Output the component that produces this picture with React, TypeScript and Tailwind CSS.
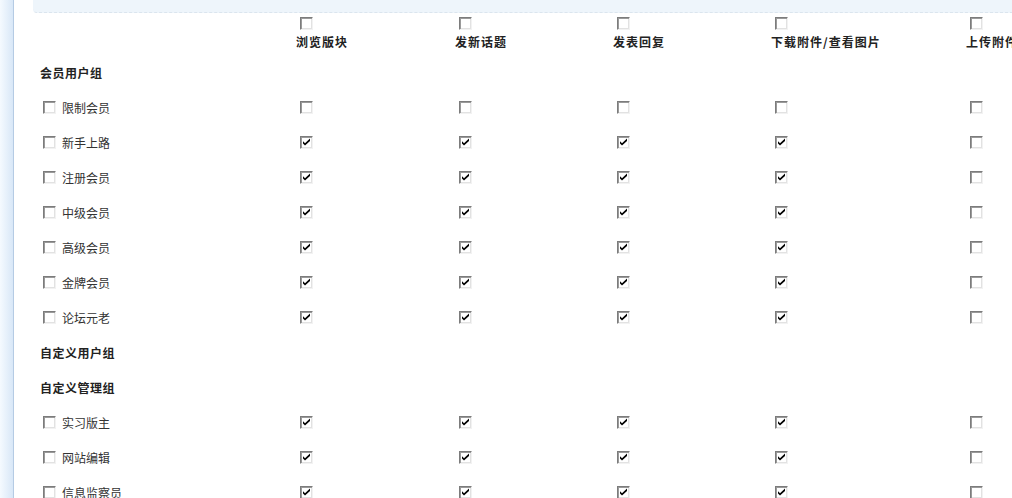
const columns = [
  { title: "浏览版块", width: "w-[159px]" },
  { title: "发新话题", width: "w-[158px]" },
  { title: "发表回复", width: "w-[158px]" },
  { title: "下载附件/查看图片", width: "w-[195px]" },
  { title: "上传附件", width: "w-[160px]" },
];

type Row = { kind: "group"; name: string } | { kind: "item"; name: string; perms: boolean[] };

const on = [true, true, true, true, false];
const off = [false, false, false, false, false];

const rows: Row[] = [
  { kind: "group", name: "会员用户组" },
  { kind: "item", name: "限制会员", perms: off },
  { kind: "item", name: "新手上路", perms: on },
  { kind: "item", name: "注册会员", perms: on },
  { kind: "item", name: "中级会员", perms: on },
  { kind: "item", name: "高级会员", perms: on },
  { kind: "item", name: "金牌会员", perms: on },
  { kind: "item", name: "论坛元老", perms: on },
  { kind: "group", name: "自定义用户组" },
  { kind: "group", name: "自定义管理组" },
  { kind: "item", name: "实习版主", perms: on },
  { kind: "item", name: "网站编辑", perms: on },
  { kind: "item", name: "信息监察员", perms: on },
];

function Check({ checked }: { checked?: boolean }) {
  return (
    <span className="relative block w-[13px] h-[13px] shrink-0 bg-white border border-t-[#7c7c7c] border-l-[#7c7c7c] border-b-[#f2f2f2] border-r-[#f2f2f2] shadow-[inset_1px_1px_0_#9a9a9a,inset_-1px_-1px_0_#e2e2e2]">
      {checked ? (
        <svg viewBox="0 0 13 13" className="absolute -left-px -top-px w-[13px] h-[13px]">
          <path d="M3 5.2 L5 7.2 L10 2.6 L10 5 L5 9.6 L3 7.6 Z" fill="#000" />
        </svg>
      ) : null}
    </span>
  );
}

export default function App() {
  return (
    <div className="flex w-[1012px] h-[498px] overflow-hidden bg-white font-['Noto_Sans_CJK_SC','Noto_Sans',sans-serif] text-[12px]">
      <div className="w-[14px] shrink-0 bg-gradient-to-r from-[#f5faff] to-[#d8e7f7] border-r border-[#b5cbe4]" />

      <div className="flex-1 flex flex-col min-w-0">
        <div className="ml-[19px] h-[13px] shrink-0 bg-[#eef5fb] border-b border-dashed border-[#dbe5ee] rounded-bl-[4px]" />

        <div className="pl-[26px] flex flex-col">
          <div className="flex h-[42px] items-start">
            <div className="w-[256px] shrink-0" />
            {columns.map((col) => (
              <div key={col.title} className={`${col.width} shrink-0 flex flex-col items-start pt-[4px]`}>
                <div className="flex ml-[4px]">
                  <Check />
                </div>
                <span className="mt-[4px] leading-[16px] font-bold text-[#222] tracking-[1px] whitespace-nowrap">
                  {col.title}
                </span>
              </div>
            ))}
          </div>

          {rows.map((row) =>
            row.kind === "group" ? (
              <div key={row.name} className="flex items-center h-[35px]">
                <span className="font-bold text-[#222] tracking-[0.5px]">{row.name}</span>
              </div>
            ) : (
              <div key={row.name} className="flex items-center h-[35px]">
                <div className="w-[256px] shrink-0 flex items-center gap-[6px] pl-[3px]">
                  <Check />
                  <span className="text-[#333]">{row.name}</span>
                </div>
                {columns.map((col, i) => (
                  <div key={col.title} className={`${col.width} shrink-0 flex items-center pl-[4px]`}>
                    <Check checked={row.perms[i]} />
                  </div>
                ))}
              </div>
            )
          )}
        </div>
      </div>
    </div>
  );
}
